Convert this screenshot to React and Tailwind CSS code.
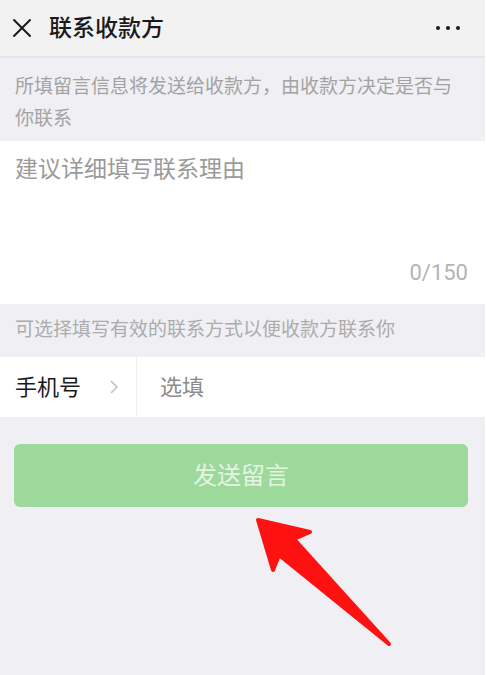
import React from 'react';

const font = { fontFamily: "Roboto, 'Noto Sans CJK SC', sans-serif" };

// 标注箭头（覆盖在页面上的红色箭头）
const RedArrow = () => (
    <svg
        className="absolute left-0 top-0 pointer-events-none"
        width="487"
        height="675"
        viewBox="0 0 487 675"
    >
        <polygon
            points="258,520 310,532 294,539 389,644 279,555 273,570"
            fill="#fe1111"
            stroke="#fe1111"
            strokeWidth="4"
            strokeLinejoin="round"
        />
    </svg>
);

const App = () => {
    return (
        <div className="relative w-[487px] h-[675px] bg-white overflow-hidden" style={font}>
            <div className="w-[485px] h-full bg-[#efeff4] flex flex-col">
                {/* Header */}
                <div className="h-[58px] bg-[#f2f2f2] border-b-2 border-[#e6e6e8] flex items-center px-[12px]">
                    <svg width="20" height="20" viewBox="0 0 20 20" className="shrink-0">
                        <path d="M2 2 L18 18 M18 2 L2 18" stroke="#1a1a1a" strokeWidth="2" strokeLinecap="round" />
                    </svg>
                    <h1 className="ml-[17px] text-[23px] font-medium text-[#1a1a1a] leading-none">联系收款方</h1>
                    <div className="ml-auto mr-[13px] flex items-center gap-[6px]">
                        <span className="w-[4px] h-[4px] rounded-full bg-[#1a1a1a]" />
                        <span className="w-[4px] h-[4px] rounded-full bg-[#1a1a1a]" />
                        <span className="w-[4px] h-[4px] rounded-full bg-[#1a1a1a]" />
                    </div>
                </div>

                {/* 提示 */}
                <p className="pl-[15px] pr-[26px] pt-[13px] pb-[6px] text-[19px] leading-[32px] text-[#a3a3a3]">
                    所填留言信息将发送给收款方，由收款方决定是否与你联系
                </p>

                {/* 留言 */}
                <div className="h-[163px] bg-white px-[15px] pt-[14px] pb-[16px] flex flex-col">
                    <p className="text-[23px] leading-[30px] text-[#9a9a9a]">建议详细填写联系理由</p>
                    <p className="mt-auto self-end pr-[2px] text-[22px] leading-[30px] text-[#b4b4b4]">0/150</p>
                </div>

                {/* 联系方式 */}
                <p className="h-[53px] flex items-center px-[15px] text-[19px] text-[#acacac]">
                    可选择填写有效的联系方式以便收款方联系你
                </p>
                <div className="h-[60px] bg-white flex items-center">
                    <div className="w-[137px] h-full flex items-center pl-[15px] border-r border-[#ededed]">
                        <span className="text-[22px] text-[#1a1a1a]">手机号</span>
                        <svg width="12" height="16" viewBox="0 0 12 16" className="ml-[27px]">
                            <path d="M3 2 L9 8 L3 14" fill="none" stroke="#c2c2c2" strokeWidth="1.6" />
                        </svg>
                    </div>
                    <span className="ml-[23px] text-[22px] text-[#8c8c8c]">选填</span>
                </div>

                {/* 按钮 */}
                <div className="px-[14px] pt-[27px]">
                    <button className="w-[454px] h-[63px] rounded-[6px] bg-[#9ed99c] text-[24px] text-[#e3f4e2] flex items-center justify-center">
                        发送留言
                    </button>
                </div>
            </div>
            <RedArrow />
        </div>
    );
};

export default App;
